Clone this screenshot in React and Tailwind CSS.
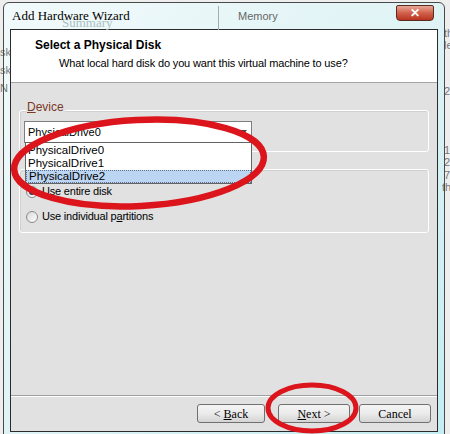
import React from "react";

const sans = { fontFamily: '"Liberation Sans", Arial, sans-serif' };
const serif = { fontFamily: '"Liberation Serif", "Times New Roman", serif' };

function Radio({ checked, label }) {
  return (
    <div className="flex items-center gap-[4px] h-[13px]">
      <div className="w-[12px] h-[12px] rounded-full border border-[#8a8a8a] bg-gradient-to-br from-[#d8d8d8] to-[#ffffff] flex items-center justify-center">
        {checked && <div className="w-[6px] h-[6px] rounded-full bg-[#2a3d5a]" />}
      </div>
      <span className="text-[11px] tracking-[-0.2px] text-black leading-none" style={sans}>{label}</span>
    </div>
  );
}

function Btn({ children, className = "" }) {
  return (
    <div
      className={"h-[19px] rounded-[3px] border border-[#707070] bg-gradient-to-b from-[#f4f4f4] via-[#ebebeb] to-[#d4d4d4] flex items-center justify-center text-[12px] text-black " + className}
      style={serif}
    >
      {children}
    </div>
  );
}

function Frag({ className, children }) {
  return (
    <div className={"absolute text-[11px] text-[#444] opacity-70 leading-none " + className} style={sans}>
      {children}
    </div>
  );
}

export default function App() {
  return (
    <div className="relative w-[450px] h-[434px] overflow-hidden bg-[#eeeeee]">
      {/* window frame */}
      <div className="absolute left-[3px] top-[2px] w-[442px] h-[434px] rounded-t-[6px] border border-[#4a4a4a] bg-gradient-to-br from-[#f2fafb] via-[#dff3f5] to-[#c4edf2] flex flex-col">
        {/* title bar */}
        <div className="relative h-[26px] shrink-0 flex items-start">
          <div className="absolute left-[58px] top-[10px] text-[13px] text-[#a9c0c4]" style={serif}>Summary</div>
          <div className="absolute left-[214px] top-[3px] w-px h-[24px] bg-[#9ab0b4]" />
          <div className="absolute left-[234px] top-[5px] text-[11px] text-[#666]" style={sans}>Memory</div>
          <div className="relative ml-[8px] mt-[6px] text-[13px] text-black leading-none" style={serif}>Add Hardware Wizard</div>
          <div className="ml-auto mr-[10px] mt-[2px] w-[38px] h-[16px] rounded-b-[4px] rounded-t-[2px] border border-[#5a2a22] bg-gradient-to-b from-[#e8a797] via-[#d0604a] to-[#b8321f] flex items-center justify-center text-white text-[12px] font-bold leading-none" style={sans}>
            ✕
          </div>
        </div>

        {/* client area */}
        <div className="ml-[6px] w-[428px] h-[403px] border border-[#2b2b2b] bg-[#e1e1e1] flex flex-col">
          {/* header */}
          <div className="h-[53px] shrink-0 bg-white border-b border-[#a5a5a5] pl-[24px] pt-[8px]">
            <div className="text-[12px] font-bold text-black leading-[14px] whitespace-nowrap" style={sans}>
              Select a Physical Disk
            </div>
            <div className="ml-[24px] mt-[4px] text-[11px] tracking-[-0.15px] text-black leading-[14px]" style={sans}>
              What local hard disk do you want this virtual machine to use?
            </div>
          </div>

          {/* body */}
          <div className="flex-1 flex flex-col px-[8px] pt-[27px]">
            {/* Device group */}
            <div className="relative h-[42px] border border-white rounded-[3px] shadow-[inset_1px_1px_0_#d0d0d0]">
              <div className="absolute left-[6px] -top-[10px] px-[1px] bg-[#e1e1e1] text-[12px] text-[#7a3a26] leading-none" style={sans}>
                <span className="underline">D</span>evice
              </div>
              <div className="absolute left-[4px] top-[10px] w-[228px] h-[22px] bg-white border border-[#7e7e7e] flex items-center pl-[3px]">
                <span className="text-[11px] text-black" style={sans}>PhysicalDrive0</span>
                <svg className="ml-auto mr-[4px]" width="8" height="5" viewBox="0 0 8 5">
                  <path d="M0 0 L8 0 L4 5 Z" fill="#444" />
                </svg>
              </div>
            </div>

            {/* partitions group */}
            <div className="mt-[17px] h-[64px] border border-white rounded-[3px] shadow-[inset_1px_1px_0_#d0d0d0] pl-[6px] pt-[15px] flex flex-col gap-[12px]">
              <Radio checked label={<><span className="underline">U</span>se entire disk</>} />
              <Radio label={<>Use individual p<span className="underline">a</span>rtitions</>} />
            </div>
          </div>

          {/* footer */}
          <div className="h-[36px] shrink-0 border-t border-[#a0a0a0] shadow-[inset_0_1px_0_#ffffff] flex items-start justify-end pt-[8px] pr-[6px]">
            <Btn className="w-[68px] mr-[13px]">&lt; <span className="underline ml-[3px]">B</span>ack</Btn>
            <Btn className="w-[72px] mr-[9px]"><span className="underline">N</span>ext &gt;</Btn>
            <Btn className="w-[72px]">Cancel</Btn>
          </div>
        </div>
      </div>

      {/* background fragments seen through the glass frame */}
      <Frag className="left-0 top-[47px]">sk</Frag>
      <Frag className="left-0 top-[65px]">sk</Frag>
      <Frag className="left-0 top-[83px]">N</Frag>
      <Frag className="left-[444px] top-[28px]">thi</Frag>
      <Frag className="left-[444px] top-[40px]">le</Frag>
      <Frag className="left-[444px] top-[86px]">2</Frag>
      <Frag className="left-[444px] top-[145px]">1</Frag>
      <Frag className="left-[444px] top-[157px]">2</Frag>
      <Frag className="left-[444px] top-[170px]">7</Frag>
      <Frag className="left-[442px] top-[182px]">thi</Frag>

      {/* open dropdown list */}
      <div className="absolute left-[25px] top-[142px] w-[227px] h-[42px] bg-white border border-[#646464] flex flex-col pt-[1px]">
        <div className="h-[13px] pl-[2px] text-[11.5px] leading-[13px] text-black" style={sans}>PhysicalDrive0</div>
        <div className="h-[13px] pl-[2px] text-[11.5px] leading-[13px] text-black" style={sans}>PhysicalDrive1</div>
        <div className="h-[13px] pl-[2px] text-[11.5px] leading-[11px] text-black bg-[#bcd5f2] border border-dotted border-[#5a6f8e]" style={sans}>PhysicalDrive2</div>
      </div>

      {/* red annotation ellipses */}
      <svg className="absolute left-0 top-0 pointer-events-none" width="450" height="434" viewBox="0 0 450 434">
        <ellipse cx="139" cy="163" rx="125" ry="43" transform="rotate(-3 139 163)" fill="none" stroke="#dc141c" strokeWidth="6.5" />
        <ellipse cx="312" cy="408" rx="44" ry="23" fill="none" stroke="#dc141c" strokeWidth="5" />
      </svg>
    </div>
  );
}
